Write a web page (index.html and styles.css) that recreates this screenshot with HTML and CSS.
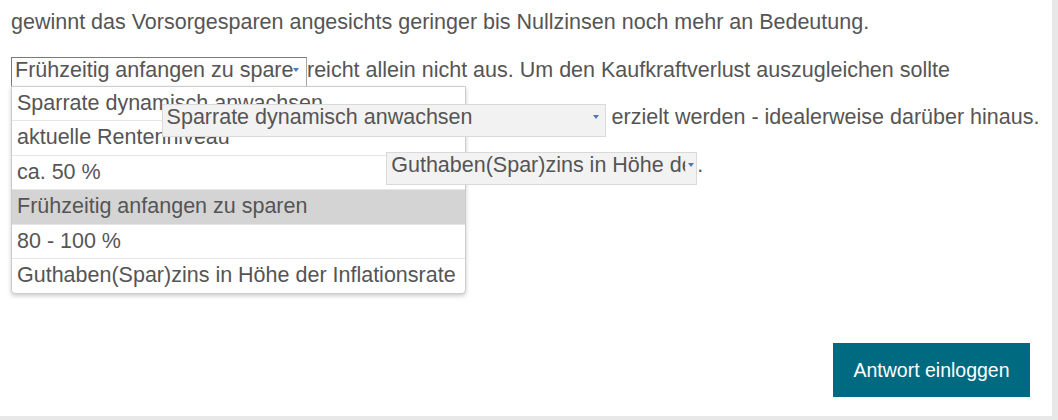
FILE: index.html
```html
<!DOCTYPE html>
<html lang="de">
<head>
<meta charset="utf-8">
<title>Lückentext</title>
<link rel="stylesheet" href="styles.css">
</head>
<body>
<div class="content">
  <p class="cloze">gewinnt das Vorsorgesparen angesichts geringer bis Nullzinsen noch mehr an Bedeutung. <span class="combo"><span class="select select-open"><span class="select-label label-1">Frühzeitig anfangen zu sparen</span><span class="select-arrow arrow-1"></span></span><span class="options" role="listbox"><span class="option" role="option">Sparrate dynamisch anwachsen</span><span class="option" role="option">aktuelle Rentenniveau</span><span class="option" role="option">ca. 50 %</span><span class="option option-active" role="option">Frühzeitig anfangen zu sparen</span><span class="option" role="option">80 - 100 %</span><span class="option" role="option">Guthaben(Spar)zins in Höhe der Inflationsrate</span></span></span>reicht allein nicht aus. Um den Kaufkraftverlust auszugleichen sollte mindestens ein <span class="select select-closed select-2"><span class="select-label label-2">Sparrate dynamisch anwachsen</span><span class="select-arrow arrow-2"></span></span> erzielt werden - idealerweise darüber hinaus. Außerdem ist es durchaus sinnvoll, die <span class="select select-closed select-3"><span class="select-label label-3">Guthaben(Spar)zins in Höhe der Inflationsrate</span><span class="select-arrow arrow-3"></span></span>.</p>
  <div class="actions">
    <button class="submit" type="button">Antwort einloggen</button>
  </div>
</div>
</body>
</html>
```
FILE: styles.css
```css
html, body {
  margin: 0;
  padding: 0;
}

body {
  background: #e8e8e8;
  font-family: "Liberation Sans", Arial, sans-serif;
  color: #555555;
}

.content {
  box-sizing: border-box;
  width: 1052px;
  height: 416px;
  background: #ffffff;
  padding: 0 10px 19px 11px;
  display: flex;
  flex-direction: column;
}

.cloze {
  margin: -1px 0 0;
  font-size: 21.5px;
  line-height: 47.5px;
}

.combo {
  position: relative;
  display: inline-block;
  line-height: 24px;
  z-index: 5;
}

.select {
  position: relative;
  display: inline-block;
  box-sizing: border-box;
  height: 33px;
  line-height: 24px;
  padding: 0 0 7px 4px;
  white-space: nowrap;
  vertical-align: baseline;
  color: #555555;
}

.select-open {
  width: 296px;
  padding-left: 3px;
  background: #fdfdfd;
  border: 1px solid #a6a6a6;
  border-left-color: #7a7a7a;
  border-top-color: #7a7a7a;
}

.select-closed {
  background: #f2f2f2;
  border: 1px solid #d9d9d9;
  z-index: 10;
}

.select-2 {
  width: 444px;
}

.select-3 {
  width: 311px;
}

.select-label {
  display: inline-block;
  clip-path: inset(-4px 0 -8px 0);
}

.label-1 {
  width: 279px;
}

.label-2 {
  width: 420px;
}

.label-3 {
  width: 294px;
}

.select-arrow {
  position: absolute;
  top: 10px;
  width: 0;
  height: 0;
  border-left: 3px solid transparent;
  border-right: 3px solid transparent;
  border-top: 4px solid #3a80c6;
}

.arrow-1 {
  right: 7px;
}

.arrow-2 {
  right: 6px;
}

.arrow-3 {
  right: 2px;
}

.options {
  position: absolute;
  left: 0;
  top: 29px;
  display: block;
  box-sizing: border-box;
  width: 455px;
  background: #ffffff;
  border: 1px solid #cccccc;
  border-radius: 0 0 4px 4px;
  box-shadow: 0 2px 4px rgba(0, 0, 0, 0.2);
  line-height: 33.5px;
  white-space: nowrap;
}

.option {
  display: block;
  padding-left: 5px;
  border-bottom: 1px solid #e6e6e6;
}

.option:last-child {
  border-bottom: none;
}

.option-active {
  background: #d4d4d4;
}

.actions {
  margin-top: auto;
  display: flex;
  justify-content: flex-end;
  padding-right: 12px;
}

.submit {
  width: 197px;
  height: 54px;
  border: none;
  border-radius: 0;
  background: #006b80;
  color: #ffffff;
  font-family: "Liberation Sans", Arial, sans-serif;
  font-size: 19.5px;
  padding: 0;
  cursor: pointer;
}
```
